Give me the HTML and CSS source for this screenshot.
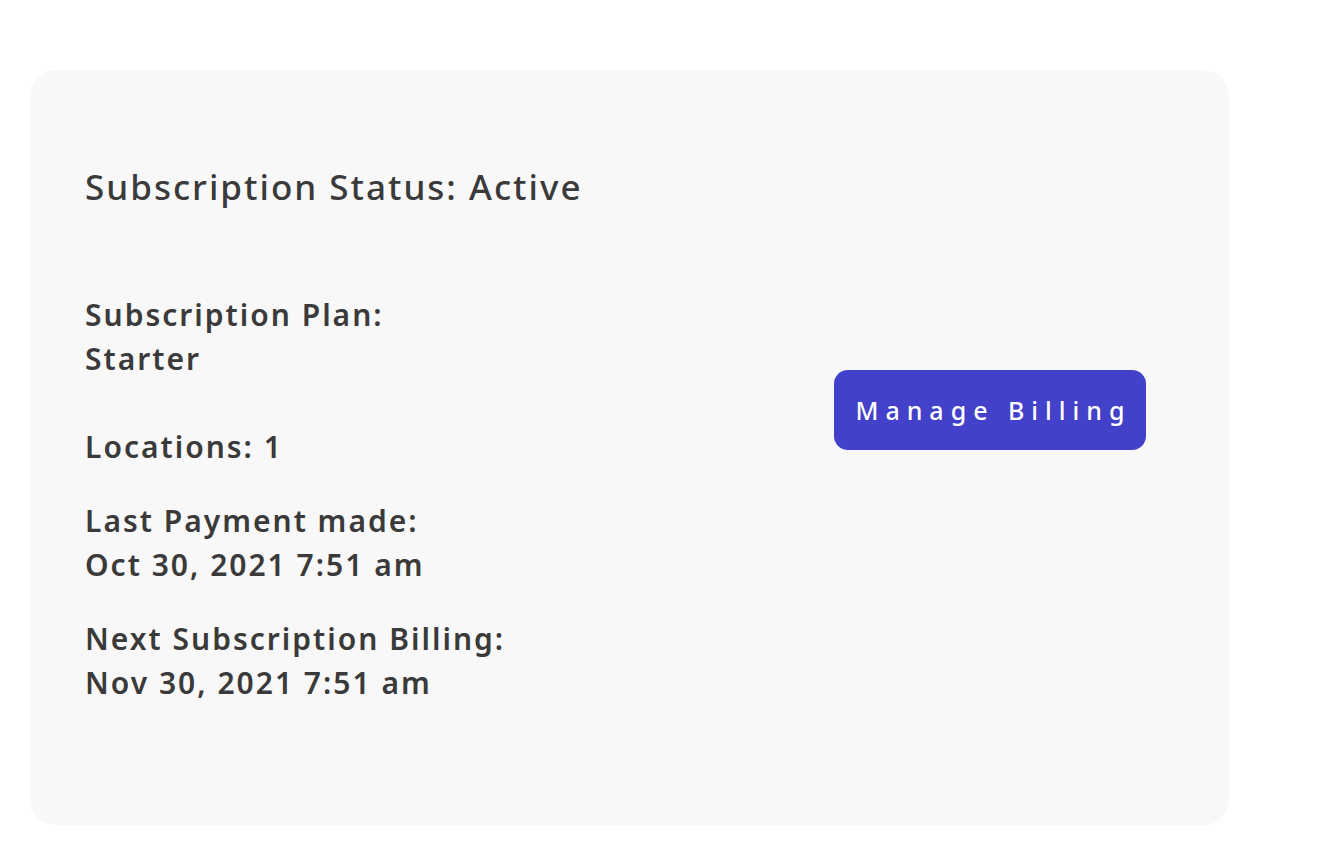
FILE: index.html
```html
<!DOCTYPE html>
<html lang="en">
<head>
    <meta charset="UTF-8">
    <meta name="viewport" content="width=device-width, initial-scale=1.0">
    <title>Subscription</title>
    <link rel="stylesheet" href="styles.css">
</head>
<body>
    <div class="card">
        <h2 class="status">Subscription Status: Active</h2>
        <div class="details">
            <div class="info">
                <p class="item">Subscription Plan:<br>Starter</p>
                <p class="item spaced">Locations: 1</p>
                <p class="item">Last Payment made:<br>Oct 30, 2021 7:51 am</p>
                <p class="item">Next Subscription Billing:<br>Nov 30, 2021 7:51 am</p>
            </div>
            <div class="actions">
                <button class="billing-btn">Manage Billing</button>
            </div>
        </div>
    </div>
</body>
</html>
```

FILE: styles.css
```css
body {
    margin: 0;
    background: #ffffff;
    font-family: 'Noto Sans', 'Open Sans', Arial, sans-serif;
    color: #3a3a3a;
}
.card {
    margin: 70px 0 0 30px;
    width: 1199px;
    height: 755px;
    box-sizing: border-box;
    padding: 97px 83px 0 55px;
    background: #f8f8f8;
    border-radius: 26px;
}
.status {
    margin: 0;
    font-size: 35px;
    line-height: 40px;
    font-weight: 500;
    letter-spacing: 2px;
}
.details {
    display: flex;
    justify-content: space-between;
    margin-top: 86px;
}
.item {
    margin: 0 0 30px;
    font-size: 30px;
    line-height: 44px;
    font-weight: 600;
    letter-spacing: 2px;
}
.item.spaced {
    margin-top: 44px;
}
.actions {
    padding-top: 77px;
}
.billing-btn {
    width: 312px;
    height: 80px;
    padding: 0 0 0 7px;
    background: #4340c9;
    color: #ffffff;
    border: none;
    border-radius: 14px;
    font-family: inherit;
    font-size: 25px;
    font-weight: 500;
    letter-spacing: 7px;
    cursor: pointer;
}
```
